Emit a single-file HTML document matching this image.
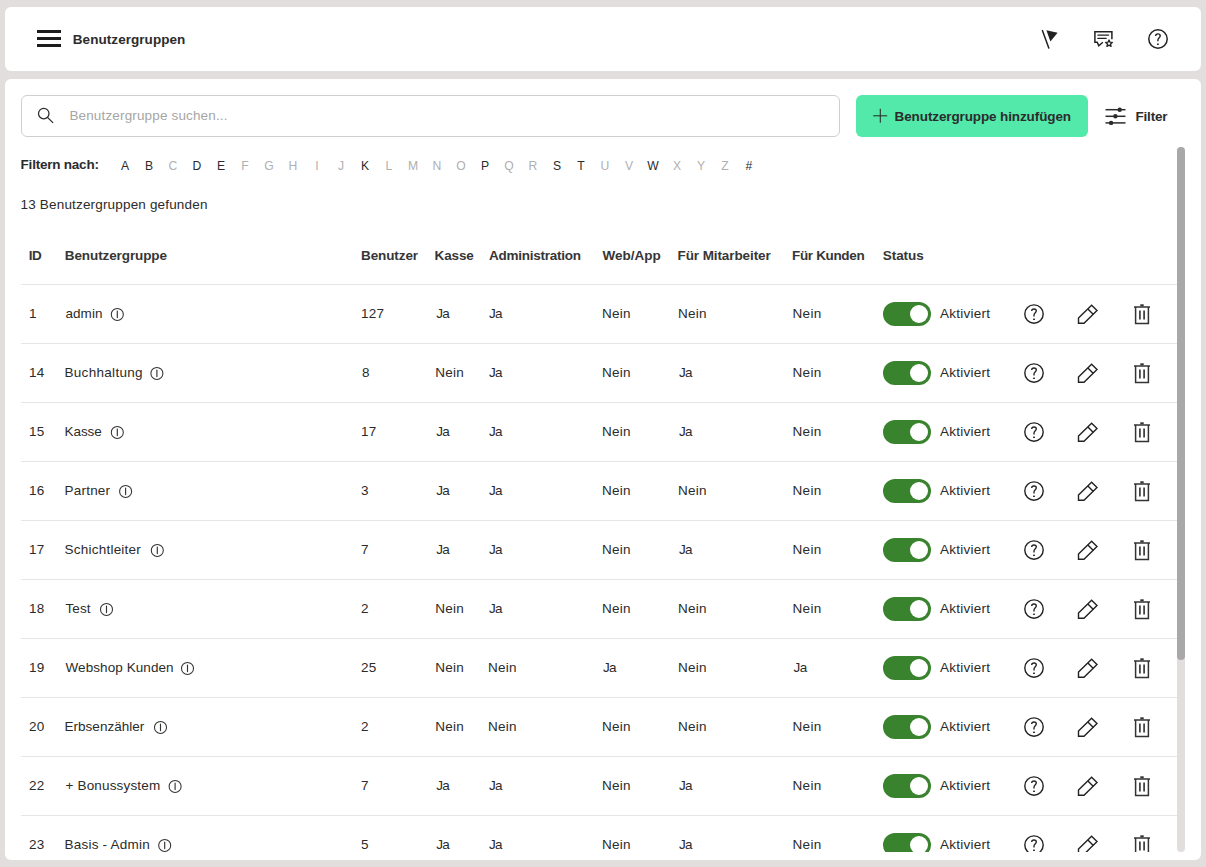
<!DOCTYPE html>
<html><head><meta charset="utf-8"><title>Benutzergruppen</title>
<style>
html,body{margin:0;padding:0}
body{width:1206px;height:867px;overflow:hidden;background:#e2dedd;position:relative;font-family:"Liberation Sans",sans-serif;color:#2b2b2b}
.card{position:absolute;background:#fff;border-radius:6px}
.t{position:absolute;white-space:nowrap;line-height:20px}
svg{position:absolute;overflow:visible}
.line{position:absolute;left:21px;width:1156px;height:1px;background:#e6e6e6}
</style></head><body>
<div class="card" style="left:5px;top:7px;width:1196px;height:64px"></div>
<div style="position:absolute;left:37px;top:30px;width:24px;height:3px;background:#1c1c1c"></div>
<div style="position:absolute;left:37px;top:37px;width:24px;height:3px;background:#1c1c1c"></div>
<div style="position:absolute;left:37px;top:44px;width:24px;height:3px;background:#1c1c1c"></div>
<svg style="left:0;top:0" width="1206" height="70">
<line x1="1042.4" y1="30.6" x2="1048.8" y2="48" stroke="#222" stroke-width="1.5" stroke-linecap="round"/>
<polygon points="1046.4,30.3 1057.6,32.7 1050.4,41.4" fill="#222"/>
<path d="M1111.9 39.3 V31.7 H1094.9 V42.2 H1097.2 L1098.8 45.8 L1102.8 42.2" fill="none" stroke="#222" stroke-width="1.5"/>
<line x1="1097.9" y1="35.1" x2="1108.6" y2="35.1" stroke="#222" stroke-width="1.4" stroke-linecap="round"/>
<line x1="1097.9" y1="38.4" x2="1106.1" y2="38.4" stroke="#222" stroke-width="1.4" stroke-linecap="round"/>
<polygon points="1109,40 1109.94,42.21 1112.33,42.42 1110.52,43.99 1111.06,46.33 1109,45.1 1106.94,46.33 1107.48,43.99 1105.67,42.42 1108.06,42.21" fill="#fff" stroke="#222" stroke-width="1.3" stroke-linejoin="round"/>
<circle cx="1158" cy="39" r="9.2" fill="none" stroke="#222" stroke-width="1.5"/>
<path d="M1155.6 36.1 C1155.6 34.7 1156.6 33.9 1157.9 33.9 C1159.2 33.9 1160.2 34.8 1160.2 36 C1160.2 37.6 1157.9 37.9 1157.9 40 V41.3" fill="none" stroke="#222" stroke-width="1.4"/>
<rect x="1157" y="43.5" width="1.8" height="1.4" fill="#222"/>
</svg>
<div class="card" style="left:5px;top:79px;width:1196px;height:781px"></div>
<div style="position:absolute;left:21px;top:95px;width:817px;height:40px;border:1px solid #cfcfcf;border-radius:6px;background:#fff"></div>
<svg style="left:0;top:0" width="1206" height="140">
<circle cx="43.75" cy="113.6" r="5.25" fill="none" stroke="#2b2b2b" stroke-width="1.25"/>
<line x1="47.5" y1="117.4" x2="53.1" y2="122.9" stroke="#2b2b2b" stroke-width="1.3"/>
<rect x="856" y="95" width="232" height="42" rx="6" fill="#52e9aa"/>
<line x1="873.2" y1="115.8" x2="887.2" y2="115.8" stroke="#2b2b2b" stroke-width="1.05"/>
<line x1="880.3" y1="108.8" x2="880.3" y2="122.8" stroke="#2b2b2b" stroke-width="1.05"/>
<line x1="1105.5" y1="109.7" x2="1125.5" y2="109.7" stroke="#2b2b2b" stroke-width="1.5"/>
<line x1="1105.5" y1="116.3" x2="1125.5" y2="116.3" stroke="#2b2b2b" stroke-width="1.5"/>
<line x1="1105.5" y1="122.9" x2="1125.5" y2="122.9" stroke="#2b2b2b" stroke-width="1.5"/>
<circle cx="1119.7" cy="109.7" r="2.2" fill="#2b2b2b"/>
<circle cx="1115.4" cy="116.3" r="2.2" fill="#2b2b2b"/>
<circle cx="1111.1" cy="122.9" r="2.2" fill="#2b2b2b"/>
</svg>
<div class="t" style="left:72.8px;top:30px;font-size:13.5px;font-weight:700;color:#2c2c2c;letter-spacing:0.057px;">Benutzergruppen</div>
<div class="t" style="left:69.4px;top:106px;font-size:13.5px;font-weight:400;color:#a6a6a6;letter-spacing:0.152px;">Benutzergruppe suchen...</div>
<div class="t" style="left:894.6px;top:107px;font-size:13.5px;font-weight:700;color:#2c2c2c;letter-spacing:-0.117px;">Benutzergruppe hinzufügen</div>
<div class="t" style="left:1135.5px;top:107px;font-size:13.5px;font-weight:700;color:#2c2c2c;letter-spacing:-0.2px;">Filter</div>
<div style="position:absolute;left:0;top:147px;width:1206px;height:705px;overflow:hidden">
<div class="t" style="left:113px;width:24px;text-align:center;top:9px;color:#2b2b2b;font-size:13.5px;transform:scaleX(0.9)">A</div>
<div class="t" style="left:137px;width:24px;text-align:center;top:9px;color:#2b2b2b;font-size:13.5px;transform:scaleX(0.9)">B</div>
<div class="t" style="left:161px;width:24px;text-align:center;top:9px;color:#b0b0b0;font-size:13.5px;transform:scaleX(0.9)">C</div>
<div class="t" style="left:185px;width:24px;text-align:center;top:9px;color:#2b2b2b;font-size:13.5px;transform:scaleX(0.9)">D</div>
<div class="t" style="left:209px;width:24px;text-align:center;top:9px;color:#2b2b2b;font-size:13.5px;transform:scaleX(0.9)">E</div>
<div class="t" style="left:233px;width:24px;text-align:center;top:9px;color:#b0b0b0;font-size:13.5px;transform:scaleX(0.9)">F</div>
<div class="t" style="left:257px;width:24px;text-align:center;top:9px;color:#b0b0b0;font-size:13.5px;transform:scaleX(0.9)">G</div>
<div class="t" style="left:281px;width:24px;text-align:center;top:9px;color:#b0b0b0;font-size:13.5px;transform:scaleX(0.9)">H</div>
<div class="t" style="left:305px;width:24px;text-align:center;top:9px;color:#b0b0b0;font-size:13.5px;transform:scaleX(0.9)">I</div>
<div class="t" style="left:329px;width:24px;text-align:center;top:9px;color:#b0b0b0;font-size:13.5px;transform:scaleX(0.9)">J</div>
<div class="t" style="left:353px;width:24px;text-align:center;top:9px;color:#2b2b2b;font-size:13.5px;transform:scaleX(0.9)">K</div>
<div class="t" style="left:377px;width:24px;text-align:center;top:9px;color:#b0b0b0;font-size:13.5px;transform:scaleX(0.9)">L</div>
<div class="t" style="left:401px;width:24px;text-align:center;top:9px;color:#b0b0b0;font-size:13.5px;transform:scaleX(0.9)">M</div>
<div class="t" style="left:425px;width:24px;text-align:center;top:9px;color:#b0b0b0;font-size:13.5px;transform:scaleX(0.9)">N</div>
<div class="t" style="left:449px;width:24px;text-align:center;top:9px;color:#b0b0b0;font-size:13.5px;transform:scaleX(0.9)">O</div>
<div class="t" style="left:473px;width:24px;text-align:center;top:9px;color:#2b2b2b;font-size:13.5px;transform:scaleX(0.9)">P</div>
<div class="t" style="left:497px;width:24px;text-align:center;top:9px;color:#b0b0b0;font-size:13.5px;transform:scaleX(0.9)">Q</div>
<div class="t" style="left:521px;width:24px;text-align:center;top:9px;color:#b0b0b0;font-size:13.5px;transform:scaleX(0.9)">R</div>
<div class="t" style="left:545px;width:24px;text-align:center;top:9px;color:#2b2b2b;font-size:13.5px;transform:scaleX(0.9)">S</div>
<div class="t" style="left:569px;width:24px;text-align:center;top:9px;color:#2b2b2b;font-size:13.5px;transform:scaleX(0.9)">T</div>
<div class="t" style="left:593px;width:24px;text-align:center;top:9px;color:#b0b0b0;font-size:13.5px;transform:scaleX(0.9)">U</div>
<div class="t" style="left:617px;width:24px;text-align:center;top:9px;color:#b0b0b0;font-size:13.5px;transform:scaleX(0.9)">V</div>
<div class="t" style="left:641px;width:24px;text-align:center;top:9px;color:#2b2b2b;font-size:13.5px;transform:scaleX(0.9)">W</div>
<div class="t" style="left:665px;width:24px;text-align:center;top:9px;color:#b0b0b0;font-size:13.5px;transform:scaleX(0.9)">X</div>
<div class="t" style="left:689px;width:24px;text-align:center;top:9px;color:#b0b0b0;font-size:13.5px;transform:scaleX(0.9)">Y</div>
<div class="t" style="left:713px;width:24px;text-align:center;top:9px;color:#b0b0b0;font-size:13.5px;transform:scaleX(0.9)">Z</div>
<div class="t" style="left:737px;width:24px;text-align:center;top:9px;color:#2b2b2b;font-size:13.5px;transform:scaleX(0.9)">#</div>
<div class="line" style="top:137px"></div>
<svg style="left:0;top:157px" width="1206" height="20"><circle cx="117.3" cy="10.4" r="6" fill="none" stroke="#333" stroke-width="1.05"/><line x1="117.3" y1="7" x2="117.3" y2="13.6" stroke="#333" stroke-width="1.15" stroke-linecap="round"/><rect x="883" y="-2" width="48" height="24" rx="12" fill="#3a832e"/><circle cx="919" cy="10" r="9" fill="#fff"/><circle cx="1034" cy="10.1" r="9.2" fill="none" stroke="#222" stroke-width="1.4"/><path d="M1031.7 7.1 C1031.7 5.7 1032.7 5 1034 5 C1035.3 5 1036.3 5.9 1036.3 7.1 C1036.3 8.7 1034 9 1034 11.1 V12.5" fill="none" stroke="#222" stroke-width="1.35"/><rect x="1033.1" y="14.6" width="1.8" height="1.4" fill="#222"/><path d="M1078.5 14 L1091.6 1.2 L1097 6.6 L1084 19.3 H1078.5 Z" fill="none" stroke="#222" stroke-width="1.4" stroke-linejoin="miter"/><line x1="1087.9" y1="5.1" x2="1093.4" y2="10.5" stroke="#222" stroke-width="1.4"/><line x1="1134" y1="3" x2="1150" y2="3" stroke="#333" stroke-width="1.5"/><rect x="1140.3" y="0.3" width="3.4" height="2" fill="#333"/><path d="M1135.6 3 V19.6 H1148.4 V3" fill="none" stroke="#333" stroke-width="1.5"/><line x1="1139.9" y1="6.6" x2="1139.9" y2="15.6" stroke="#444" stroke-width="1.8"/><line x1="1144.1" y1="6.6" x2="1144.1" y2="15.6" stroke="#444" stroke-width="1.8"/></svg>
<div class="line" style="top:196px"></div>
<svg style="left:0;top:216px" width="1206" height="20"><circle cx="156.9" cy="10.4" r="6" fill="none" stroke="#333" stroke-width="1.05"/><line x1="156.9" y1="7" x2="156.9" y2="13.6" stroke="#333" stroke-width="1.15" stroke-linecap="round"/><rect x="883" y="-2" width="48" height="24" rx="12" fill="#3a832e"/><circle cx="919" cy="10" r="9" fill="#fff"/><circle cx="1034" cy="10.1" r="9.2" fill="none" stroke="#222" stroke-width="1.4"/><path d="M1031.7 7.1 C1031.7 5.7 1032.7 5 1034 5 C1035.3 5 1036.3 5.9 1036.3 7.1 C1036.3 8.7 1034 9 1034 11.1 V12.5" fill="none" stroke="#222" stroke-width="1.35"/><rect x="1033.1" y="14.6" width="1.8" height="1.4" fill="#222"/><path d="M1078.5 14 L1091.6 1.2 L1097 6.6 L1084 19.3 H1078.5 Z" fill="none" stroke="#222" stroke-width="1.4" stroke-linejoin="miter"/><line x1="1087.9" y1="5.1" x2="1093.4" y2="10.5" stroke="#222" stroke-width="1.4"/><line x1="1134" y1="3" x2="1150" y2="3" stroke="#333" stroke-width="1.5"/><rect x="1140.3" y="0.3" width="3.4" height="2" fill="#333"/><path d="M1135.6 3 V19.6 H1148.4 V3" fill="none" stroke="#333" stroke-width="1.5"/><line x1="1139.9" y1="6.6" x2="1139.9" y2="15.6" stroke="#444" stroke-width="1.8"/><line x1="1144.1" y1="6.6" x2="1144.1" y2="15.6" stroke="#444" stroke-width="1.8"/></svg>
<div class="line" style="top:255px"></div>
<svg style="left:0;top:275px" width="1206" height="20"><circle cx="117.3" cy="10.4" r="6" fill="none" stroke="#333" stroke-width="1.05"/><line x1="117.3" y1="7" x2="117.3" y2="13.6" stroke="#333" stroke-width="1.15" stroke-linecap="round"/><rect x="883" y="-2" width="48" height="24" rx="12" fill="#3a832e"/><circle cx="919" cy="10" r="9" fill="#fff"/><circle cx="1034" cy="10.1" r="9.2" fill="none" stroke="#222" stroke-width="1.4"/><path d="M1031.7 7.1 C1031.7 5.7 1032.7 5 1034 5 C1035.3 5 1036.3 5.9 1036.3 7.1 C1036.3 8.7 1034 9 1034 11.1 V12.5" fill="none" stroke="#222" stroke-width="1.35"/><rect x="1033.1" y="14.6" width="1.8" height="1.4" fill="#222"/><path d="M1078.5 14 L1091.6 1.2 L1097 6.6 L1084 19.3 H1078.5 Z" fill="none" stroke="#222" stroke-width="1.4" stroke-linejoin="miter"/><line x1="1087.9" y1="5.1" x2="1093.4" y2="10.5" stroke="#222" stroke-width="1.4"/><line x1="1134" y1="3" x2="1150" y2="3" stroke="#333" stroke-width="1.5"/><rect x="1140.3" y="0.3" width="3.4" height="2" fill="#333"/><path d="M1135.6 3 V19.6 H1148.4 V3" fill="none" stroke="#333" stroke-width="1.5"/><line x1="1139.9" y1="6.6" x2="1139.9" y2="15.6" stroke="#444" stroke-width="1.8"/><line x1="1144.1" y1="6.6" x2="1144.1" y2="15.6" stroke="#444" stroke-width="1.8"/></svg>
<div class="line" style="top:314px"></div>
<svg style="left:0;top:334px" width="1206" height="20"><circle cx="125.6" cy="10.4" r="6" fill="none" stroke="#333" stroke-width="1.05"/><line x1="125.6" y1="7" x2="125.6" y2="13.6" stroke="#333" stroke-width="1.15" stroke-linecap="round"/><rect x="883" y="-2" width="48" height="24" rx="12" fill="#3a832e"/><circle cx="919" cy="10" r="9" fill="#fff"/><circle cx="1034" cy="10.1" r="9.2" fill="none" stroke="#222" stroke-width="1.4"/><path d="M1031.7 7.1 C1031.7 5.7 1032.7 5 1034 5 C1035.3 5 1036.3 5.9 1036.3 7.1 C1036.3 8.7 1034 9 1034 11.1 V12.5" fill="none" stroke="#222" stroke-width="1.35"/><rect x="1033.1" y="14.6" width="1.8" height="1.4" fill="#222"/><path d="M1078.5 14 L1091.6 1.2 L1097 6.6 L1084 19.3 H1078.5 Z" fill="none" stroke="#222" stroke-width="1.4" stroke-linejoin="miter"/><line x1="1087.9" y1="5.1" x2="1093.4" y2="10.5" stroke="#222" stroke-width="1.4"/><line x1="1134" y1="3" x2="1150" y2="3" stroke="#333" stroke-width="1.5"/><rect x="1140.3" y="0.3" width="3.4" height="2" fill="#333"/><path d="M1135.6 3 V19.6 H1148.4 V3" fill="none" stroke="#333" stroke-width="1.5"/><line x1="1139.9" y1="6.6" x2="1139.9" y2="15.6" stroke="#444" stroke-width="1.8"/><line x1="1144.1" y1="6.6" x2="1144.1" y2="15.6" stroke="#444" stroke-width="1.8"/></svg>
<div class="line" style="top:373px"></div>
<svg style="left:0;top:393px" width="1206" height="20"><circle cx="157.3" cy="10.4" r="6" fill="none" stroke="#333" stroke-width="1.05"/><line x1="157.3" y1="7" x2="157.3" y2="13.6" stroke="#333" stroke-width="1.15" stroke-linecap="round"/><rect x="883" y="-2" width="48" height="24" rx="12" fill="#3a832e"/><circle cx="919" cy="10" r="9" fill="#fff"/><circle cx="1034" cy="10.1" r="9.2" fill="none" stroke="#222" stroke-width="1.4"/><path d="M1031.7 7.1 C1031.7 5.7 1032.7 5 1034 5 C1035.3 5 1036.3 5.9 1036.3 7.1 C1036.3 8.7 1034 9 1034 11.1 V12.5" fill="none" stroke="#222" stroke-width="1.35"/><rect x="1033.1" y="14.6" width="1.8" height="1.4" fill="#222"/><path d="M1078.5 14 L1091.6 1.2 L1097 6.6 L1084 19.3 H1078.5 Z" fill="none" stroke="#222" stroke-width="1.4" stroke-linejoin="miter"/><line x1="1087.9" y1="5.1" x2="1093.4" y2="10.5" stroke="#222" stroke-width="1.4"/><line x1="1134" y1="3" x2="1150" y2="3" stroke="#333" stroke-width="1.5"/><rect x="1140.3" y="0.3" width="3.4" height="2" fill="#333"/><path d="M1135.6 3 V19.6 H1148.4 V3" fill="none" stroke="#333" stroke-width="1.5"/><line x1="1139.9" y1="6.6" x2="1139.9" y2="15.6" stroke="#444" stroke-width="1.8"/><line x1="1144.1" y1="6.6" x2="1144.1" y2="15.6" stroke="#444" stroke-width="1.8"/></svg>
<div class="line" style="top:432px"></div>
<svg style="left:0;top:452px" width="1206" height="20"><circle cx="106.5" cy="10.4" r="6" fill="none" stroke="#333" stroke-width="1.05"/><line x1="106.5" y1="7" x2="106.5" y2="13.6" stroke="#333" stroke-width="1.15" stroke-linecap="round"/><rect x="883" y="-2" width="48" height="24" rx="12" fill="#3a832e"/><circle cx="919" cy="10" r="9" fill="#fff"/><circle cx="1034" cy="10.1" r="9.2" fill="none" stroke="#222" stroke-width="1.4"/><path d="M1031.7 7.1 C1031.7 5.7 1032.7 5 1034 5 C1035.3 5 1036.3 5.9 1036.3 7.1 C1036.3 8.7 1034 9 1034 11.1 V12.5" fill="none" stroke="#222" stroke-width="1.35"/><rect x="1033.1" y="14.6" width="1.8" height="1.4" fill="#222"/><path d="M1078.5 14 L1091.6 1.2 L1097 6.6 L1084 19.3 H1078.5 Z" fill="none" stroke="#222" stroke-width="1.4" stroke-linejoin="miter"/><line x1="1087.9" y1="5.1" x2="1093.4" y2="10.5" stroke="#222" stroke-width="1.4"/><line x1="1134" y1="3" x2="1150" y2="3" stroke="#333" stroke-width="1.5"/><rect x="1140.3" y="0.3" width="3.4" height="2" fill="#333"/><path d="M1135.6 3 V19.6 H1148.4 V3" fill="none" stroke="#333" stroke-width="1.5"/><line x1="1139.9" y1="6.6" x2="1139.9" y2="15.6" stroke="#444" stroke-width="1.8"/><line x1="1144.1" y1="6.6" x2="1144.1" y2="15.6" stroke="#444" stroke-width="1.8"/></svg>
<div class="line" style="top:491px"></div>
<svg style="left:0;top:511px" width="1206" height="20"><circle cx="187.5" cy="10.4" r="6" fill="none" stroke="#333" stroke-width="1.05"/><line x1="187.5" y1="7" x2="187.5" y2="13.6" stroke="#333" stroke-width="1.15" stroke-linecap="round"/><rect x="883" y="-2" width="48" height="24" rx="12" fill="#3a832e"/><circle cx="919" cy="10" r="9" fill="#fff"/><circle cx="1034" cy="10.1" r="9.2" fill="none" stroke="#222" stroke-width="1.4"/><path d="M1031.7 7.1 C1031.7 5.7 1032.7 5 1034 5 C1035.3 5 1036.3 5.9 1036.3 7.1 C1036.3 8.7 1034 9 1034 11.1 V12.5" fill="none" stroke="#222" stroke-width="1.35"/><rect x="1033.1" y="14.6" width="1.8" height="1.4" fill="#222"/><path d="M1078.5 14 L1091.6 1.2 L1097 6.6 L1084 19.3 H1078.5 Z" fill="none" stroke="#222" stroke-width="1.4" stroke-linejoin="miter"/><line x1="1087.9" y1="5.1" x2="1093.4" y2="10.5" stroke="#222" stroke-width="1.4"/><line x1="1134" y1="3" x2="1150" y2="3" stroke="#333" stroke-width="1.5"/><rect x="1140.3" y="0.3" width="3.4" height="2" fill="#333"/><path d="M1135.6 3 V19.6 H1148.4 V3" fill="none" stroke="#333" stroke-width="1.5"/><line x1="1139.9" y1="6.6" x2="1139.9" y2="15.6" stroke="#444" stroke-width="1.8"/><line x1="1144.1" y1="6.6" x2="1144.1" y2="15.6" stroke="#444" stroke-width="1.8"/></svg>
<div class="line" style="top:550px"></div>
<svg style="left:0;top:570px" width="1206" height="20"><circle cx="160.5" cy="10.4" r="6" fill="none" stroke="#333" stroke-width="1.05"/><line x1="160.5" y1="7" x2="160.5" y2="13.6" stroke="#333" stroke-width="1.15" stroke-linecap="round"/><rect x="883" y="-2" width="48" height="24" rx="12" fill="#3a832e"/><circle cx="919" cy="10" r="9" fill="#fff"/><circle cx="1034" cy="10.1" r="9.2" fill="none" stroke="#222" stroke-width="1.4"/><path d="M1031.7 7.1 C1031.7 5.7 1032.7 5 1034 5 C1035.3 5 1036.3 5.9 1036.3 7.1 C1036.3 8.7 1034 9 1034 11.1 V12.5" fill="none" stroke="#222" stroke-width="1.35"/><rect x="1033.1" y="14.6" width="1.8" height="1.4" fill="#222"/><path d="M1078.5 14 L1091.6 1.2 L1097 6.6 L1084 19.3 H1078.5 Z" fill="none" stroke="#222" stroke-width="1.4" stroke-linejoin="miter"/><line x1="1087.9" y1="5.1" x2="1093.4" y2="10.5" stroke="#222" stroke-width="1.4"/><line x1="1134" y1="3" x2="1150" y2="3" stroke="#333" stroke-width="1.5"/><rect x="1140.3" y="0.3" width="3.4" height="2" fill="#333"/><path d="M1135.6 3 V19.6 H1148.4 V3" fill="none" stroke="#333" stroke-width="1.5"/><line x1="1139.9" y1="6.6" x2="1139.9" y2="15.6" stroke="#444" stroke-width="1.8"/><line x1="1144.1" y1="6.6" x2="1144.1" y2="15.6" stroke="#444" stroke-width="1.8"/></svg>
<div class="line" style="top:609px"></div>
<svg style="left:0;top:629px" width="1206" height="20"><circle cx="175.1" cy="10.4" r="6" fill="none" stroke="#333" stroke-width="1.05"/><line x1="175.1" y1="7" x2="175.1" y2="13.6" stroke="#333" stroke-width="1.15" stroke-linecap="round"/><rect x="883" y="-2" width="48" height="24" rx="12" fill="#3a832e"/><circle cx="919" cy="10" r="9" fill="#fff"/><circle cx="1034" cy="10.1" r="9.2" fill="none" stroke="#222" stroke-width="1.4"/><path d="M1031.7 7.1 C1031.7 5.7 1032.7 5 1034 5 C1035.3 5 1036.3 5.9 1036.3 7.1 C1036.3 8.7 1034 9 1034 11.1 V12.5" fill="none" stroke="#222" stroke-width="1.35"/><rect x="1033.1" y="14.6" width="1.8" height="1.4" fill="#222"/><path d="M1078.5 14 L1091.6 1.2 L1097 6.6 L1084 19.3 H1078.5 Z" fill="none" stroke="#222" stroke-width="1.4" stroke-linejoin="miter"/><line x1="1087.9" y1="5.1" x2="1093.4" y2="10.5" stroke="#222" stroke-width="1.4"/><line x1="1134" y1="3" x2="1150" y2="3" stroke="#333" stroke-width="1.5"/><rect x="1140.3" y="0.3" width="3.4" height="2" fill="#333"/><path d="M1135.6 3 V19.6 H1148.4 V3" fill="none" stroke="#333" stroke-width="1.5"/><line x1="1139.9" y1="6.6" x2="1139.9" y2="15.6" stroke="#444" stroke-width="1.8"/><line x1="1144.1" y1="6.6" x2="1144.1" y2="15.6" stroke="#444" stroke-width="1.8"/></svg>
<div class="line" style="top:668px"></div>
<svg style="left:0;top:688px" width="1206" height="20"><circle cx="164.7" cy="10.4" r="6" fill="none" stroke="#333" stroke-width="1.05"/><line x1="164.7" y1="7" x2="164.7" y2="13.6" stroke="#333" stroke-width="1.15" stroke-linecap="round"/><rect x="883" y="-2" width="48" height="24" rx="12" fill="#3a832e"/><circle cx="919" cy="10" r="9" fill="#fff"/><circle cx="1034" cy="10.1" r="9.2" fill="none" stroke="#222" stroke-width="1.4"/><path d="M1031.7 7.1 C1031.7 5.7 1032.7 5 1034 5 C1035.3 5 1036.3 5.9 1036.3 7.1 C1036.3 8.7 1034 9 1034 11.1 V12.5" fill="none" stroke="#222" stroke-width="1.35"/><rect x="1033.1" y="14.6" width="1.8" height="1.4" fill="#222"/><path d="M1078.5 14 L1091.6 1.2 L1097 6.6 L1084 19.3 H1078.5 Z" fill="none" stroke="#222" stroke-width="1.4" stroke-linejoin="miter"/><line x1="1087.9" y1="5.1" x2="1093.4" y2="10.5" stroke="#222" stroke-width="1.4"/><line x1="1134" y1="3" x2="1150" y2="3" stroke="#333" stroke-width="1.5"/><rect x="1140.3" y="0.3" width="3.4" height="2" fill="#333"/><path d="M1135.6 3 V19.6 H1148.4 V3" fill="none" stroke="#333" stroke-width="1.5"/><line x1="1139.9" y1="6.6" x2="1139.9" y2="15.6" stroke="#444" stroke-width="1.8"/><line x1="1144.1" y1="6.6" x2="1144.1" y2="15.6" stroke="#444" stroke-width="1.8"/></svg>
<div class="t" style="left:20.6px;top:8px;font-size:13.5px;font-weight:700;color:#2c2c2c;letter-spacing:-0.225px;">Filtern nach:</div>
<div class="t" style="left:20.6px;top:48px;font-size:13.5px;font-weight:400;color:#2b2b2b;letter-spacing:0.169px;">13 Benutzergruppen gefunden</div>
<div class="t" style="left:28.7px;top:99px;font-size:13.5px;font-weight:700;color:#363636;letter-spacing:-0.5px;">ID</div>
<div class="t" style="left:64.8px;top:99px;font-size:13.5px;font-weight:700;color:#363636;letter-spacing:-0.1px;">Benutzergruppe</div>
<div class="t" style="left:361px;top:99px;font-size:13.5px;font-weight:700;color:#363636;letter-spacing:-0.1px;">Benutzer</div>
<div class="t" style="left:434.6px;top:99px;font-size:13.5px;font-weight:700;color:#363636;letter-spacing:-0.125px;">Kasse</div>
<div class="t" style="left:489px;top:99px;font-size:13.5px;font-weight:700;color:#363636;letter-spacing:-0.254px;">Administration</div>
<div class="t" style="left:602.6px;top:99px;font-size:13.5px;font-weight:700;color:#363636;letter-spacing:0.0px;">Web/App</div>
<div class="t" style="left:677.5px;top:99px;font-size:13.5px;font-weight:700;color:#363636;letter-spacing:-0.093px;">Für Mitarbeiter</div>
<div class="t" style="left:792.1px;top:99px;font-size:13.5px;font-weight:700;color:#363636;letter-spacing:-0.356px;">Für Kunden</div>
<div class="t" style="left:882.8px;top:99px;font-size:13.5px;font-weight:700;color:#363636;letter-spacing:-0.08px;">Status</div>
<div class="t" style="left:29px;top:157px;font-size:13.5px;font-weight:400;color:#2b2b2b;letter-spacing:0.35px;">1</div>
<div class="t" style="left:65.5px;top:157px;font-size:13.5px;font-weight:400;color:#2b2b2b;letter-spacing:0.05px;">admin</div>
<div class="t" style="left:360.9px;top:157px;font-size:13.5px;font-weight:400;color:#2b2b2b;letter-spacing:0.35px;">127</div>
<div class="t" style="left:436.2px;top:157px;font-size:13.5px;font-weight:400;color:#2b2b2b;letter-spacing:-0.7px;">Ja</div>
<div class="t" style="left:489px;top:157px;font-size:13.5px;font-weight:400;color:#2b2b2b;letter-spacing:-0.7px;">Ja</div>
<div class="t" style="left:602px;top:157px;font-size:13.5px;font-weight:400;color:#2b2b2b;letter-spacing:0.267px;">Nein</div>
<div class="t" style="left:678px;top:157px;font-size:13.5px;font-weight:400;color:#2b2b2b;letter-spacing:0.267px;">Nein</div>
<div class="t" style="left:792.6px;top:157px;font-size:13.5px;font-weight:400;color:#2b2b2b;letter-spacing:0.267px;">Nein</div>
<div class="t" style="left:940.1px;top:157px;font-size:13.5px;font-weight:400;color:#2b2b2b;letter-spacing:0.25px;">Aktiviert</div>
<div class="t" style="left:29px;top:216px;font-size:13.5px;font-weight:400;color:#2b2b2b;letter-spacing:0.35px;">14</div>
<div class="t" style="left:64.5px;top:216px;font-size:13.5px;font-weight:400;color:#2b2b2b;letter-spacing:0.3px;">Buchhaltung</div>
<div class="t" style="left:361.9px;top:216px;font-size:13.5px;font-weight:400;color:#2b2b2b;letter-spacing:0.35px;">8</div>
<div class="t" style="left:435.2px;top:216px;font-size:13.5px;font-weight:400;color:#2b2b2b;letter-spacing:0.267px;">Nein</div>
<div class="t" style="left:489px;top:216px;font-size:13.5px;font-weight:400;color:#2b2b2b;letter-spacing:-0.7px;">Ja</div>
<div class="t" style="left:602px;top:216px;font-size:13.5px;font-weight:400;color:#2b2b2b;letter-spacing:0.267px;">Nein</div>
<div class="t" style="left:679px;top:216px;font-size:13.5px;font-weight:400;color:#2b2b2b;letter-spacing:-0.7px;">Ja</div>
<div class="t" style="left:792.6px;top:216px;font-size:13.5px;font-weight:400;color:#2b2b2b;letter-spacing:0.267px;">Nein</div>
<div class="t" style="left:940.1px;top:216px;font-size:13.5px;font-weight:400;color:#2b2b2b;letter-spacing:0.25px;">Aktiviert</div>
<div class="t" style="left:29px;top:275px;font-size:13.5px;font-weight:400;color:#2b2b2b;letter-spacing:0.35px;">15</div>
<div class="t" style="left:64.5px;top:275px;font-size:13.5px;font-weight:400;color:#2b2b2b;letter-spacing:-0.05px;">Kasse</div>
<div class="t" style="left:360.9px;top:275px;font-size:13.5px;font-weight:400;color:#2b2b2b;letter-spacing:0.35px;">17</div>
<div class="t" style="left:436.2px;top:275px;font-size:13.5px;font-weight:400;color:#2b2b2b;letter-spacing:-0.7px;">Ja</div>
<div class="t" style="left:489px;top:275px;font-size:13.5px;font-weight:400;color:#2b2b2b;letter-spacing:-0.7px;">Ja</div>
<div class="t" style="left:602px;top:275px;font-size:13.5px;font-weight:400;color:#2b2b2b;letter-spacing:0.267px;">Nein</div>
<div class="t" style="left:679px;top:275px;font-size:13.5px;font-weight:400;color:#2b2b2b;letter-spacing:-0.7px;">Ja</div>
<div class="t" style="left:792.6px;top:275px;font-size:13.5px;font-weight:400;color:#2b2b2b;letter-spacing:0.267px;">Nein</div>
<div class="t" style="left:940.1px;top:275px;font-size:13.5px;font-weight:400;color:#2b2b2b;letter-spacing:0.25px;">Aktiviert</div>
<div class="t" style="left:29px;top:334px;font-size:13.5px;font-weight:400;color:#2b2b2b;letter-spacing:0.35px;">16</div>
<div class="t" style="left:64.5px;top:334px;font-size:13.5px;font-weight:400;color:#2b2b2b;letter-spacing:0.217px;">Partner</div>
<div class="t" style="left:360.9px;top:334px;font-size:13.5px;font-weight:400;color:#2b2b2b;letter-spacing:0.35px;">3</div>
<div class="t" style="left:436.2px;top:334px;font-size:13.5px;font-weight:400;color:#2b2b2b;letter-spacing:-0.7px;">Ja</div>
<div class="t" style="left:489px;top:334px;font-size:13.5px;font-weight:400;color:#2b2b2b;letter-spacing:-0.7px;">Ja</div>
<div class="t" style="left:602px;top:334px;font-size:13.5px;font-weight:400;color:#2b2b2b;letter-spacing:0.267px;">Nein</div>
<div class="t" style="left:678px;top:334px;font-size:13.5px;font-weight:400;color:#2b2b2b;letter-spacing:0.267px;">Nein</div>
<div class="t" style="left:792.6px;top:334px;font-size:13.5px;font-weight:400;color:#2b2b2b;letter-spacing:0.267px;">Nein</div>
<div class="t" style="left:940.1px;top:334px;font-size:13.5px;font-weight:400;color:#2b2b2b;letter-spacing:0.25px;">Aktiviert</div>
<div class="t" style="left:29px;top:393px;font-size:13.5px;font-weight:400;color:#2b2b2b;letter-spacing:0.35px;">17</div>
<div class="t" style="left:64.5px;top:393px;font-size:13.5px;font-weight:400;color:#2b2b2b;letter-spacing:0.233px;">Schichtleiter</div>
<div class="t" style="left:360.9px;top:393px;font-size:13.5px;font-weight:400;color:#2b2b2b;letter-spacing:0.35px;">7</div>
<div class="t" style="left:436.2px;top:393px;font-size:13.5px;font-weight:400;color:#2b2b2b;letter-spacing:-0.7px;">Ja</div>
<div class="t" style="left:489px;top:393px;font-size:13.5px;font-weight:400;color:#2b2b2b;letter-spacing:-0.7px;">Ja</div>
<div class="t" style="left:602px;top:393px;font-size:13.5px;font-weight:400;color:#2b2b2b;letter-spacing:0.267px;">Nein</div>
<div class="t" style="left:679px;top:393px;font-size:13.5px;font-weight:400;color:#2b2b2b;letter-spacing:-0.7px;">Ja</div>
<div class="t" style="left:792.6px;top:393px;font-size:13.5px;font-weight:400;color:#2b2b2b;letter-spacing:0.267px;">Nein</div>
<div class="t" style="left:940.1px;top:393px;font-size:13.5px;font-weight:400;color:#2b2b2b;letter-spacing:0.25px;">Aktiviert</div>
<div class="t" style="left:29px;top:452px;font-size:13.5px;font-weight:400;color:#2b2b2b;letter-spacing:0.35px;">18</div>
<div class="t" style="left:65.5px;top:452px;font-size:13.5px;font-weight:400;color:#2b2b2b;letter-spacing:0.1px;">Test</div>
<div class="t" style="left:360.9px;top:452px;font-size:13.5px;font-weight:400;color:#2b2b2b;letter-spacing:0.35px;">2</div>
<div class="t" style="left:435.2px;top:452px;font-size:13.5px;font-weight:400;color:#2b2b2b;letter-spacing:0.267px;">Nein</div>
<div class="t" style="left:489px;top:452px;font-size:13.5px;font-weight:400;color:#2b2b2b;letter-spacing:-0.7px;">Ja</div>
<div class="t" style="left:602px;top:452px;font-size:13.5px;font-weight:400;color:#2b2b2b;letter-spacing:0.267px;">Nein</div>
<div class="t" style="left:678px;top:452px;font-size:13.5px;font-weight:400;color:#2b2b2b;letter-spacing:0.267px;">Nein</div>
<div class="t" style="left:792.6px;top:452px;font-size:13.5px;font-weight:400;color:#2b2b2b;letter-spacing:0.267px;">Nein</div>
<div class="t" style="left:940.1px;top:452px;font-size:13.5px;font-weight:400;color:#2b2b2b;letter-spacing:0.25px;">Aktiviert</div>
<div class="t" style="left:29px;top:511px;font-size:13.5px;font-weight:400;color:#2b2b2b;letter-spacing:0.35px;">19</div>
<div class="t" style="left:65.5px;top:511px;font-size:13.5px;font-weight:400;color:#2b2b2b;letter-spacing:0.077px;">Webshop Kunden</div>
<div class="t" style="left:360.9px;top:511px;font-size:13.5px;font-weight:400;color:#2b2b2b;letter-spacing:0.35px;">25</div>
<div class="t" style="left:435.2px;top:511px;font-size:13.5px;font-weight:400;color:#2b2b2b;letter-spacing:0.267px;">Nein</div>
<div class="t" style="left:488px;top:511px;font-size:13.5px;font-weight:400;color:#2b2b2b;letter-spacing:0.267px;">Nein</div>
<div class="t" style="left:603px;top:511px;font-size:13.5px;font-weight:400;color:#2b2b2b;letter-spacing:-0.7px;">Ja</div>
<div class="t" style="left:678px;top:511px;font-size:13.5px;font-weight:400;color:#2b2b2b;letter-spacing:0.267px;">Nein</div>
<div class="t" style="left:793.6px;top:511px;font-size:13.5px;font-weight:400;color:#2b2b2b;letter-spacing:-0.7px;">Ja</div>
<div class="t" style="left:940.1px;top:511px;font-size:13.5px;font-weight:400;color:#2b2b2b;letter-spacing:0.25px;">Aktiviert</div>
<div class="t" style="left:29px;top:570px;font-size:13.5px;font-weight:400;color:#2b2b2b;letter-spacing:0.35px;">20</div>
<div class="t" style="left:64.5px;top:570px;font-size:13.5px;font-weight:400;color:#2b2b2b;letter-spacing:0.027px;">Erbsenzähler</div>
<div class="t" style="left:360.9px;top:570px;font-size:13.5px;font-weight:400;color:#2b2b2b;letter-spacing:0.35px;">2</div>
<div class="t" style="left:435.2px;top:570px;font-size:13.5px;font-weight:400;color:#2b2b2b;letter-spacing:0.267px;">Nein</div>
<div class="t" style="left:488px;top:570px;font-size:13.5px;font-weight:400;color:#2b2b2b;letter-spacing:0.267px;">Nein</div>
<div class="t" style="left:602px;top:570px;font-size:13.5px;font-weight:400;color:#2b2b2b;letter-spacing:0.267px;">Nein</div>
<div class="t" style="left:678px;top:570px;font-size:13.5px;font-weight:400;color:#2b2b2b;letter-spacing:0.267px;">Nein</div>
<div class="t" style="left:792.6px;top:570px;font-size:13.5px;font-weight:400;color:#2b2b2b;letter-spacing:0.267px;">Nein</div>
<div class="t" style="left:940.1px;top:570px;font-size:13.5px;font-weight:400;color:#2b2b2b;letter-spacing:0.25px;">Aktiviert</div>
<div class="t" style="left:29px;top:629px;font-size:13.5px;font-weight:400;color:#2b2b2b;letter-spacing:0.35px;">22</div>
<div class="t" style="left:65.5px;top:629px;font-size:13.5px;font-weight:400;color:#2b2b2b;letter-spacing:0.167px;">+ Bonussystem</div>
<div class="t" style="left:360.9px;top:629px;font-size:13.5px;font-weight:400;color:#2b2b2b;letter-spacing:0.35px;">7</div>
<div class="t" style="left:436.2px;top:629px;font-size:13.5px;font-weight:400;color:#2b2b2b;letter-spacing:-0.7px;">Ja</div>
<div class="t" style="left:489px;top:629px;font-size:13.5px;font-weight:400;color:#2b2b2b;letter-spacing:-0.7px;">Ja</div>
<div class="t" style="left:602px;top:629px;font-size:13.5px;font-weight:400;color:#2b2b2b;letter-spacing:0.267px;">Nein</div>
<div class="t" style="left:679px;top:629px;font-size:13.5px;font-weight:400;color:#2b2b2b;letter-spacing:-0.7px;">Ja</div>
<div class="t" style="left:792.6px;top:629px;font-size:13.5px;font-weight:400;color:#2b2b2b;letter-spacing:0.267px;">Nein</div>
<div class="t" style="left:940.1px;top:629px;font-size:13.5px;font-weight:400;color:#2b2b2b;letter-spacing:0.25px;">Aktiviert</div>
<div class="t" style="left:29px;top:688px;font-size:13.5px;font-weight:400;color:#2b2b2b;letter-spacing:0.35px;">23</div>
<div class="t" style="left:64.5px;top:688px;font-size:13.5px;font-weight:400;color:#2b2b2b;letter-spacing:0.217px;">Basis - Admin</div>
<div class="t" style="left:360.9px;top:688px;font-size:13.5px;font-weight:400;color:#2b2b2b;letter-spacing:0.35px;">5</div>
<div class="t" style="left:436.2px;top:688px;font-size:13.5px;font-weight:400;color:#2b2b2b;letter-spacing:-0.7px;">Ja</div>
<div class="t" style="left:489px;top:688px;font-size:13.5px;font-weight:400;color:#2b2b2b;letter-spacing:-0.7px;">Ja</div>
<div class="t" style="left:602px;top:688px;font-size:13.5px;font-weight:400;color:#2b2b2b;letter-spacing:0.267px;">Nein</div>
<div class="t" style="left:679px;top:688px;font-size:13.5px;font-weight:400;color:#2b2b2b;letter-spacing:-0.7px;">Ja</div>
<div class="t" style="left:792.6px;top:688px;font-size:13.5px;font-weight:400;color:#2b2b2b;letter-spacing:0.267px;">Nein</div>
<div class="t" style="left:940.1px;top:688px;font-size:13.5px;font-weight:400;color:#2b2b2b;letter-spacing:0.25px;">Aktiviert</div>
</div>
<div style="position:absolute;left:1177px;top:147px;width:8px;height:705px;border-radius:4px;background:#e2dedd"></div>
<div style="position:absolute;left:1177px;top:147px;width:8px;height:513px;border-radius:4px;background:#a8a8a8"></div>
</body></html>
